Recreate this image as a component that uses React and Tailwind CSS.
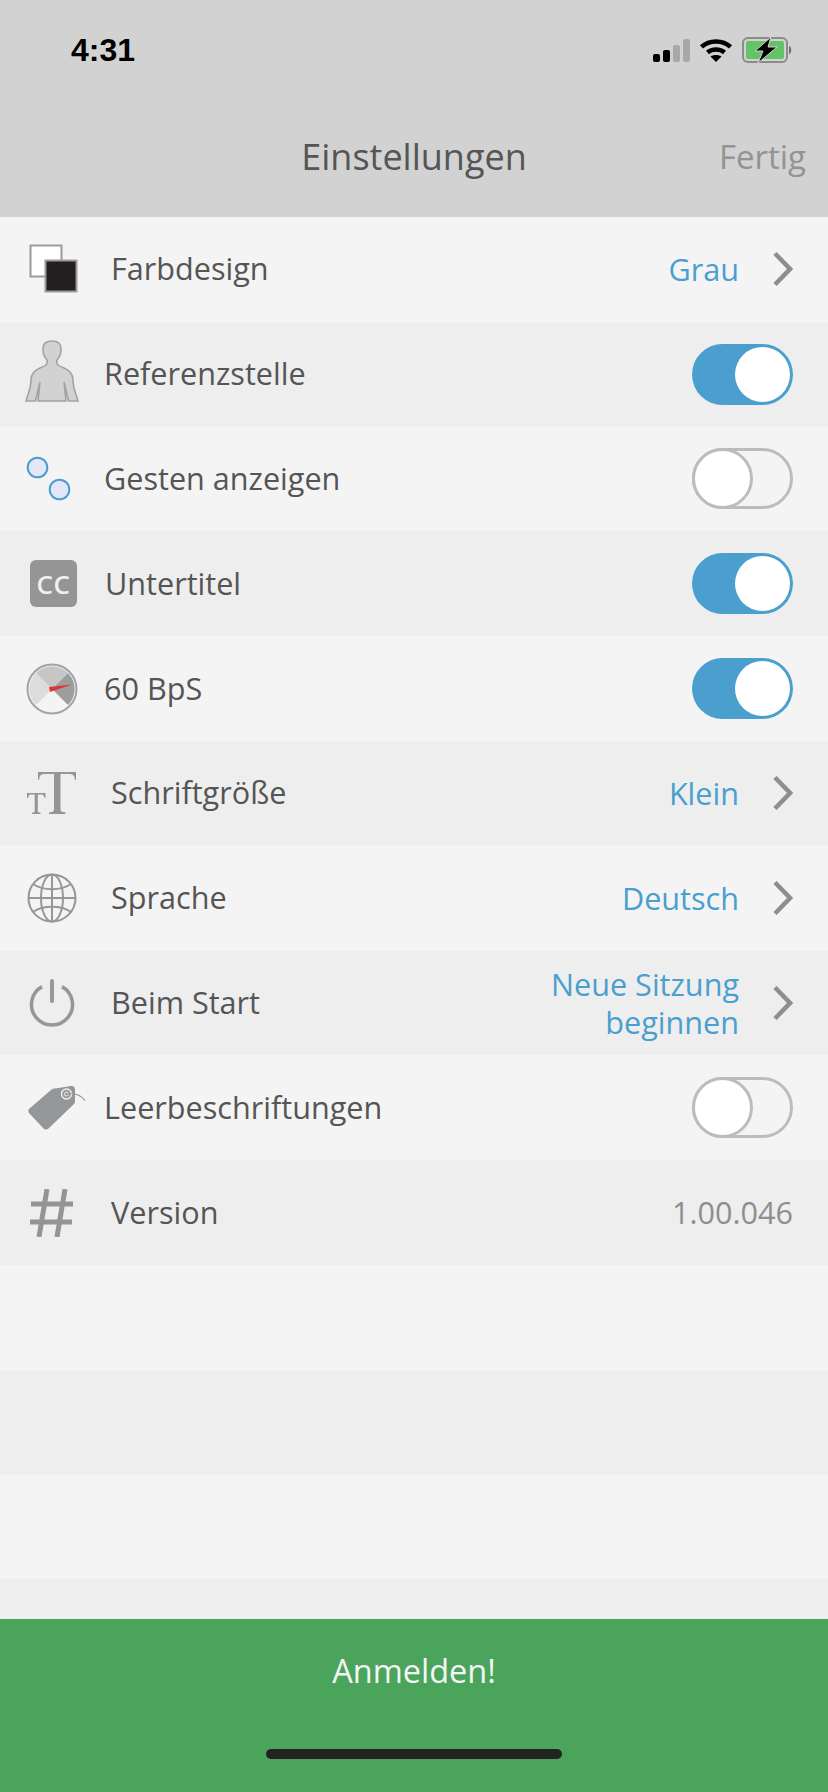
import { Fragment } from "react";

const BLUE = "#4a9fcf";

function Toggle({ on }) {
  if (on) {
    return (
      <div className="w-[101px] h-[61px] rounded-full bg-[#4a9fcf] flex items-center justify-end pr-[3px]">
        <div className="w-[55px] h-[55px] rounded-full bg-white" />
      </div>
    );
  }
  return (
    <div className="w-[101px] h-[61px] rounded-full border-[3px] border-[#bcbcbc] bg-[#f4f4f4] flex items-center">
      <div className="w-[61px] h-[61px] rounded-full bg-white border-[3px] border-[#bcbcbc] -ml-[3px] shrink-0" />
    </div>
  );
}

function Chevron() {
  return (
    <svg width="20" height="34" viewBox="0 0 20 34" className="ml-[34px]">
      <path d="M2 1.500 L17 17 L2 32.500" fill="none" stroke="#8e8e8e" strokeWidth="4.500" />
    </svg>
  );
}

const icons = {
  theme: (
    <svg width="52" height="50" viewBox="0 0 52 50">
      <rect x="1.500" y="1.500" width="31" height="31" fill="#fff" stroke="#9a9a9a" strokeWidth="2" />
      <rect x="16.500" y="16.500" width="31" height="31" fill="#231f20" stroke="#9a9a9a" strokeWidth="2" />
    </svg>
  ),
  body: (
    <svg width="54" height="62" viewBox="0 0 54 62">
      <path
        d="M1 61 C3 54 6 48 6 40 C6 33 10 30 15 28 C20 26 23 25 22 20 C19 17 18 13 18 9 C18 3 22 1 27 1 C32 1 36 3 36 9 C36 13 35 17 32 20 C31 25 34 26 39 28 C44 30 48 33 48 40 C48 48 51 54 53 61 H43.500 L39 42 L41 61 H13 L15 42 L10.500 61 Z"
        fill="#d2d2d2"
        stroke="#a3a3a3"
        strokeWidth="1.600"
      />
    </svg>
  ),
  gestures: (
    <svg width="46" height="46" viewBox="0 0 46 46">
      <circle cx="11.500" cy="11.500" r="9.800" fill="#e3e7f8" stroke={BLUE} strokeWidth="2" />
      <circle cx="33.500" cy="33.500" r="9.800" fill="#e3e7f8" stroke={BLUE} strokeWidth="2" />
    </svg>
  ),
  cc: (
    <div className="w-[47px] h-[47px] rounded-[6px] bg-[#959595] flex items-center justify-center text-[#f0f0f0] text-[26px] font-semibold tracking-[0.5px] leading-none">
      CC
    </div>
  ),
  speed: (
    <svg width="52" height="52" viewBox="0 0 52 52">
      <circle cx="26" cy="26" r="24.500" fill="#f4f4f4" stroke="#a3a3a3" strokeWidth="2" />
      <path d="M26 26 L10 10 A22.600 22.600 0 0 0 10 42 Z" fill="#dcdcdc" />
      <path d="M26 26 L10 10 A22.600 22.600 0 0 1 42 10 Z" fill="#c6c6c6" />
      <path d="M26 26 L42 10 A22.600 22.600 0 0 1 42 42 Z" fill="#9d9d9d" />
      <path d="M23 24 L46 21.500 L24 29 Z" fill="#dc3535" />
    </svg>
  ),
  text: (
    <svg width="52" height="44" viewBox="0 0 52 44">
      <path
        d="M12 1 H50 V9 H49 C48.500 5 47.500 3 43 3 H34.500 V38 C34.500 40.500 35.500 41 39.500 41.500 V43 H23 V41.500 C27 41 28 40.500 28 38 V3 H19 C14.500 3 13.500 5 13 9 H12 Z"
        fill="#959595"
      />
      <path
        d="M1 22 H19.500 V27 H18.500 C18 25 17.500 23.500 15.500 23.500 H11.800 V40 C11.800 41 12.500 41.500 14.500 41.700 V43 H6 V41.700 C8 41.500 8.700 41 8.700 40 V23.500 H5 C3 23.500 2.500 25 2 27 H1 Z"
        fill="#959595"
      />
    </svg>
  ),
  globe: (
    <svg width="50" height="50" viewBox="0 0 50 50" fill="none" stroke="#979797" strokeWidth="2">
      <circle cx="25" cy="25" r="23.500" />
      <ellipse cx="25" cy="25" rx="11" ry="23.500" />
      <path d="M25 1.500 V48.500 M1.500 25 H48.500" />
      <path d="M6 11 C 16 18, 34 18, 44 11" />
      <path d="M6 39 C 16 32, 34 32, 44 39" />
    </svg>
  ),
  power: (
    <svg width="46" height="48" viewBox="0 0 46 48" fill="none" stroke="#979797" strokeLinecap="round">
      <path d="M13 7.600 A20.500 20.500 0 1 0 33 7.600" strokeWidth="3.500" strokeLinecap="butt" />
      <path d="M23 2 V22" strokeWidth="4" />
    </svg>
  ),
  tag: (
    <svg width="60" height="46" viewBox="0 0 60 46">
      <path
        d="M2 24 L24 5 C25 4 26 3.500 28 3.500 L44 1 C47 1 48 2 48 5 L48 16 C48 18 47 19 46 20 L22 43 C20 45 18 45 16.500 43.500 L2 28 C1 27 1 25 2 24 Z"
        fill="#949698"
      />
      <circle cx="39.500" cy="9" r="5" fill="none" stroke="#f0f0f0" strokeWidth="1.400" />
      <circle cx="39.500" cy="9" r="2" fill="none" stroke="#f0f0f0" strokeWidth="1" />
      <path d="M41 9 C48 8 54 10 58 15.500" fill="none" stroke="#949698" strokeWidth="1.200" />
    </svg>
  ),
  hash: (
    <svg width="44" height="48" viewBox="0 0 44 48" fill="none" stroke="#949494" strokeWidth="5">
      <path d="M1 15 H43 M0 33 H42" />
      <path d="M17 0 L9 48 M35 0 L27 48" />
    </svg>
  ),
};

const rows = [
  { icon: "theme", iconClass: "ml-[29px] w-[52px]", label: "Farbdesign", gap: "ml-[30px]", value: "Grau" },
  { icon: "body", iconClass: "ml-[25px] w-[54px] mb-[7px]", label: "Referenzstelle", gap: "ml-[25px]", toggle: true },
  { icon: "gestures", iconClass: "ml-[26px] w-[46px]", label: "Gesten anzeigen", gap: "ml-[32px]", toggle: false },
  { icon: "cc", iconClass: "ml-[30px] w-[47px]", label: "Untertitel", gap: "ml-[28px]", toggle: true },
  { icon: "speed", iconClass: "ml-[26px] w-[52px]", label: "60 BpS", gap: "ml-[26px]", toggle: true },
  { icon: "text", iconClass: "ml-[26px] w-[52px]", label: "Schriftgröße", gap: "ml-[33px]", value: "Klein" },
  { icon: "globe", iconClass: "ml-[27px] w-[50px]", label: "Sprache", gap: "ml-[34px]", value: "Deutsch" },
  { icon: "power", iconClass: "ml-[29px] w-[46px]", label: "Beim Start", gap: "ml-[36px]", value: ["Neue Sitzung", "beginnen"] },
  { icon: "tag", iconClass: "ml-[27px] w-[60px]", label: "Leerbeschriftungen", gap: "ml-[17px]", toggle: false },
  { icon: "hash", iconClass: "ml-[30px] w-[44px]", label: "Version", gap: "ml-[37px]", version: "1.00.046" },
];

function Row({ row, index }) {
  return (
    <div className={`h-[104.8px] flex items-center pr-[35px] ${index % 2 ? "bg-[#eeeeee]" : "bg-[#f4f4f4]"}`}>
      <div className={`${row.iconClass} flex justify-center shrink-0`}>{icons[row.icon]}</div>
      <span className={`${row.gap} text-[30.6px] text-[#555555]`}>{row.label}</span>
      <div className="ml-auto flex items-center">
        {row.value && (
          <Fragment>
            <span className="text-[30.6px] leading-[38px] text-right text-[#4a9fcf]">
              {[].concat(row.value).map((line) => (
                <span key={line} className="block">{line}</span>
              ))}
            </span>
            <Chevron />
          </Fragment>
        )}
        {row.toggle !== undefined && <Toggle on={row.toggle} />}
        {row.version && <span className="text-[30.6px] text-[#8e8e8e]">{row.version}</span>}
      </div>
    </div>
  );
}

export default function App() {
  return (
    <div className="w-[828px] h-[1792px] flex flex-col overflow-hidden bg-[#f4f4f4] font-['Open_Sans',sans-serif]">
      {/* Status bar and title */}
      <header className="h-[217px] shrink-0 bg-[#d2d2d2] flex flex-col">
        <div className="h-[100px] flex items-center justify-between pl-[71px] pr-[34px]">
          <span className="text-[32px] font-bold text-black font-['Liberation_Sans',sans-serif]">4:31</span>
          <div className="flex items-center gap-[10px]">
            <svg width="37" height="23" viewBox="0 0 37 23">
              <rect x="0" y="15" width="7" height="8" rx="2" fill="#000" />
              <rect x="10" y="11" width="7" height="12" rx="2" fill="#000" />
              <rect x="20" y="6" width="7" height="17" rx="2" fill="#a8a8a8" />
              <rect x="30" y="0" width="7" height="23" rx="2" fill="#a8a8a8" />
            </svg>
            <svg width="32" height="23" viewBox="0 0 32 23" fill="none" stroke="#000" strokeWidth="4.500">
              <path d="M1.500 8 C9 0.500 23 0.500 30.500 8" />
              <path d="M7.500 13.500 C12 9.500 20 9.500 24.500 13.500" />
              <path d="M16 23 L10.500 17.500 C13 15.500 19 15.500 21.500 17.500 Z" fill="#000" stroke="none" />
            </svg>
            <svg width="52" height="26" viewBox="0 0 52 26">
              <rect x="1" y="1" width="44" height="24" rx="5" fill="none" stroke="#8b8b8b" strokeWidth="2" />
              <rect x="4" y="4" width="38" height="18" rx="2" fill="#62c466" />
              <path d="M47 9 C50 10 50 16 47 17 Z" fill="#6e6e6e" />
              <path d="M29 0 L13 14 H21 L16 26 L35 10 H26 Z" fill="#000" stroke="#d2d2d2" strokeWidth="1" />
            </svg>
          </div>
        </div>
        <div className="relative flex-1 flex items-start justify-center pt-[32px]">
          <span className="text-[36px] text-[#555555] leading-[50px]">Einstellungen</span>
          <span className="absolute right-[22px] top-[32px] text-[33px] leading-[50px] text-[#939393]">Fertig</span>
        </div>
      </header>

      {/* Settings list */}
      <div className="flex-1 overflow-hidden">
        {rows.map((row, i) => (
          <Row key={row.label} row={row} index={i} />
        ))}
        <div className="h-[104.8px] bg-[#f4f4f4]" />
        <div className="h-[104.8px] bg-[#eeeeee]" />
        <div className="h-[104.8px] bg-[#f4f4f4]" />
        <div className="h-[104.8px] bg-[#eeeeee]" />
      </div>

      {/* Login button */}
      <footer className="h-[173px] shrink-0 bg-[#4aa45c] flex flex-col items-center">
        <span className="mt-[31px] text-[32.5px] leading-[42px] text-[#f5f5f5]">Anmelden!</span>
        <div className="mt-[57px] w-[296px] h-[10px] rounded-full bg-[#232323]" />
      </footer>
    </div>
  );
}
